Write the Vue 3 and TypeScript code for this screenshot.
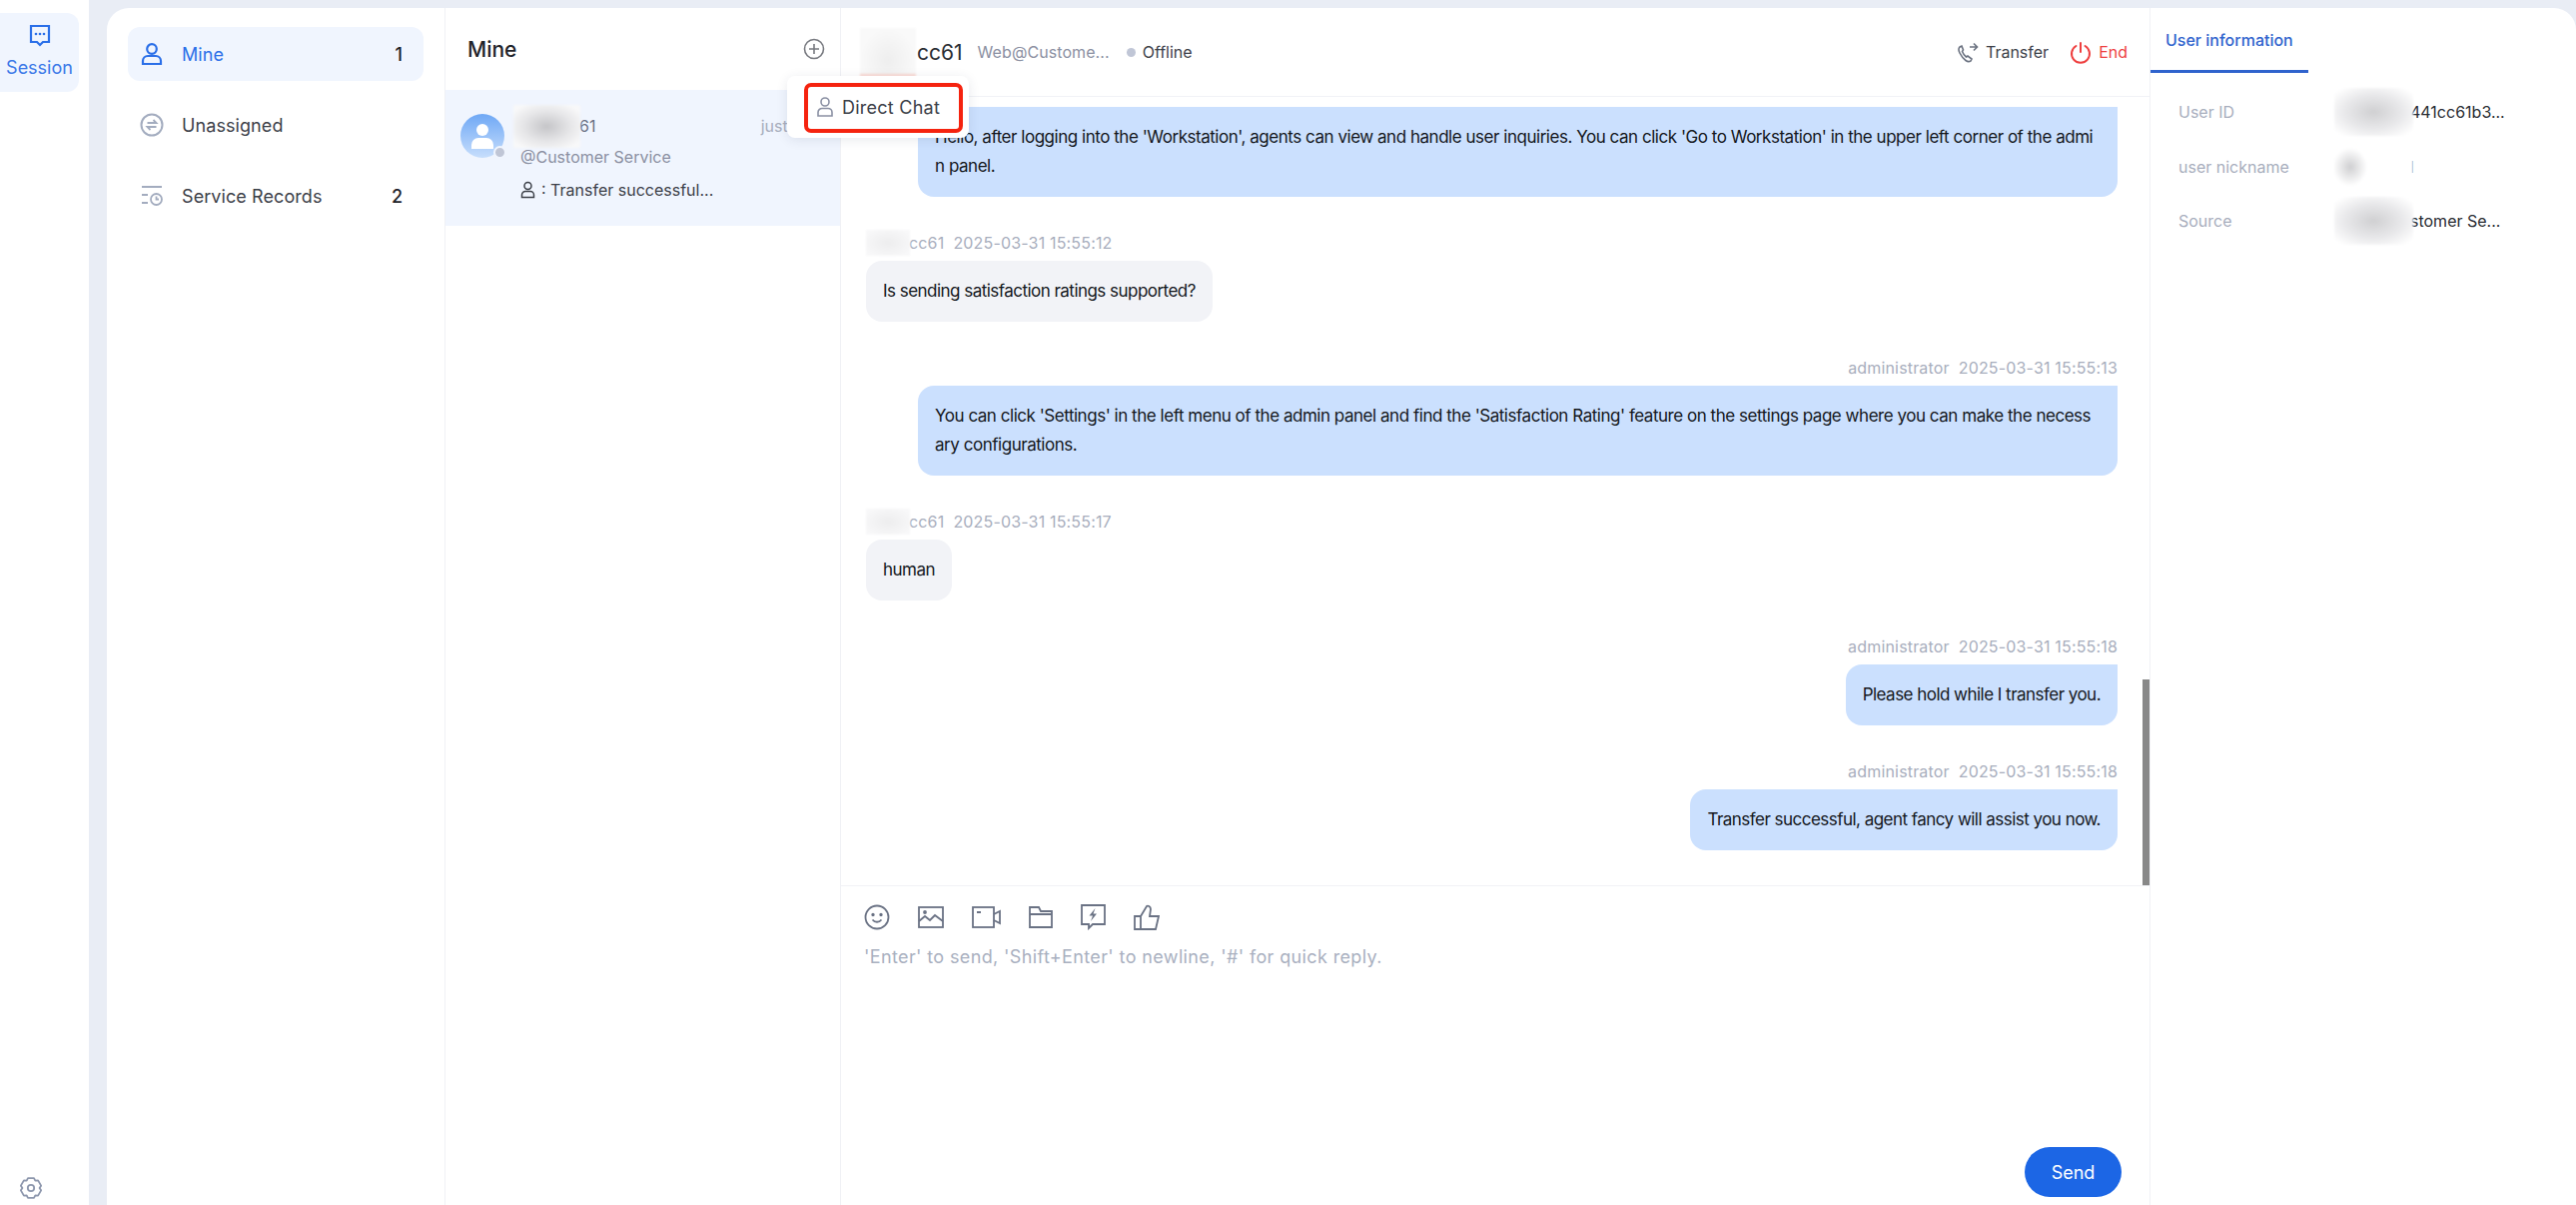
<script setup lang="ts">
interface Msg { side: 'l' | 'r'; who?: string; mask?: boolean; time?: string; lines: string[]; cls?: string }
const msgs: Msg[] = [
  { side: 'r', lines: ["Hello, after logging into the 'Workstation', agents can view and handle user inquiries. You can click 'Go to Workstation' in the upper left corner of the admi", 'n panel.'], cls: 'wide' },
  { side: 'l', who: 'cc61', mask: true, time: '2025-03-31 15:55:12', lines: ['Is sending satisfaction ratings supported?'] },
  { side: 'r', who: 'administrator', time: '2025-03-31 15:55:13', lines: ["You can click 'Settings' in the left menu of the admin panel and find the 'Satisfaction Rating' feature on the settings page where you can make the necess", 'ary configurations.'], cls: 'wide' },
  { side: 'l', who: 'cc61', mask: true, time: '2025-03-31 15:55:17', lines: ['human'] },
  { side: 'r', who: 'administrator', time: '2025-03-31 15:55:18', lines: ['Please hold while I transfer you.'] },
  { side: 'r', who: 'administrator', time: '2025-03-31 15:55:18', lines: ['Transfer successful, agent fancy will assist you now.'] },
]

function gearPath(): string {
  const pts: string[] = []
  for (let i = 0; i < 6; i++) {
    const c = -90 + i * 60
    for (const [da, r] of [[-17, 10.4], [17, 10.4], [30, 8.6]] as const) {
      const a = ((c + da) * Math.PI) / 180
      pts.push(`${(12 + r * Math.cos(a)).toFixed(2)} ${(12 + r * Math.sin(a)).toFixed(2)}`)
    }
  }
  return 'M' + pts.join('L') + 'Z'
}
const gear = gearPath()
</script>

<template>
  <div class="app">
    <nav class="rail">
      <div class="rail-item">
        <svg width="22" height="24" viewBox="0 0 22 24" fill="none"><path d="M2 2h18v16h-6l-3 3-3-3H2z" stroke="#2a6fe8" stroke-width="2.2"/><circle cx="7" cy="10" r="1.3" fill="#2a6fe8"/><circle cx="11" cy="10" r="1.3" fill="#2a6fe8"/><circle cx="15" cy="10" r="1.3" fill="#2a6fe8"/></svg>
        <span>Session</span>
      </div>
      <svg class="gear" width="24" height="24" viewBox="0 0 24 24" fill="none" stroke="#8d97ad" stroke-width="1.8" stroke-linejoin="round"><path :d="gear"/><circle cx="12" cy="12" r="3.2"/></svg>
    </nav>

    <div class="card">
      <aside class="menu">
        <div class="menu-item active">
          <svg width="22" height="24" viewBox="0 0 22 24" fill="none" stroke="#2a6fe8" stroke-width="2.2"><circle cx="11" cy="7" r="4.8"/><path d="M2 22v-3a5 5 0 0 1 5-5h8a5 5 0 0 1 5 5v3z"/></svg>
          <span class="menu-label">Mine</span><b>1</b>
        </div>
        <div class="menu-item">
          <svg width="24" height="24" viewBox="0 0 24 24" fill="none" stroke="#a3acbf" stroke-width="2"><circle cx="12" cy="12" r="10.5"/><path d="M7.5 10h9l-3-3M16.5 14h-9l3 3" stroke-width="1.8"/></svg>
          <span class="menu-label">Unassigned</span>
        </div>
        <div class="menu-item">
          <svg width="24" height="24" viewBox="0 0 24 24" fill="none" stroke="#a3acbf" stroke-width="1.8"><path d="M2 3h20M2 11h6M2 19h6"/><circle cx="16.5" cy="15.5" r="5.5"/><path d="M16.5 12.5v3h2.5"/></svg>
          <span class="menu-label">Service Records</span><b>2</b>
        </div>
      </aside>

      <section class="list">
        <header class="list-head">
          <h2>Mine</h2>
          <svg width="22" height="22" viewBox="0 0 22 22" fill="none" stroke="#77797f" stroke-width="1.6"><circle cx="11" cy="11" r="9.5"/><path d="M11 6v10M6 11h10"/></svg>
        </header>
        <div class="popup">
          <div class="popup-inner">
            <svg width="18" height="22" viewBox="0 0 18 22" fill="none" stroke="#8a90a3" stroke-width="1.6"><circle cx="9" cy="6" r="4"/><path d="M2 20v-3.5A4 4 0 0 1 6 12.5h6a4 4 0 0 1 4 4V20z"/></svg>
            <span>Direct Chat</span>
          </div>
          <i class="annot"></i>
        </div>
        <div class="conv">
          <div class="avatar">
            <svg width="26" height="28" viewBox="0 0 26 28" fill="#fff"><circle cx="13" cy="8" r="6"/><path d="M2 27v-4a7 7 0 0 1 7-7h8a7 7 0 0 1 7 7v4z"/></svg>
            <i class="dot"></i>
          </div>
          <div class="conv-body">
            <div class="conv-top"><span class="conv-name"><i class="mask m-list"></i>61</span><span class="conv-time">just now</span></div>
            <div class="conv-src">@Customer Service</div>
            <div class="conv-msg">
              <svg width="15" height="18" viewBox="0 0 15 18" fill="none" stroke="#3c4048" stroke-width="1.5"><circle cx="7.5" cy="5" r="3.5"/><path d="M1.5 16.5V14A3.5 3.5 0 0 1 5 10.5h5a3.5 3.5 0 0 1 3.5 3.500v2.500z"/></svg>
              <span>: Transfer successful...</span>
            </div>
          </div>
        </div>
      </section>

      <section class="chat">
        <header class="chat-head">
          <span class="chat-name"><i class="mask m-head"></i>cc61</span>
          <span class="chat-src">Web@Custome...</span>
          <span class="chat-status"><i></i>Offline</span>
          <span class="spacer"></span>
          <span class="act">
            <svg width="22" height="24" viewBox="0 0 22 24" fill="none" stroke="#6b7280" stroke-width="1.6"><path d="M3 7c-1.500 1.500-1.500 3 0 6s4 6 6 7.500 3.500 1.500 5 .5l1-2-4-3-1.500 1c-1.500-1-3-3-4-5.500L6.500 10 5 6z"/><path d="M13 7h7M17 3.500L20.500 7 17 10.500"/></svg>
            Transfer
          </span>
          <span class="act end">
            <svg width="22" height="24" viewBox="0 0 22 24" fill="none" stroke="#ee3f3f" stroke-width="2" stroke-linecap="round"><path d="M6.500 6a9 9 0 1 0 9 0M11 3v9"/></svg>
            End
          </span>
        </header>

        <div class="msgs">
          <div v-for="(m, i) in msgs" :key="i" class="msg" :class="m.side">
            <div v-if="m.who" class="meta"><i v-if="m.mask" class="mask m-meta"></i><span>{{ m.who }}</span><span>{{ m.time }}</span></div>
            <div class="bubble" :class="[m.side, m.cls]"><div v-for="(l, j) in m.lines" :key="j">{{ l }}</div></div>
          </div>
          <i class="thumb"></i>
        </div>

        <div class="composer">
          <div class="tools">
            <svg width="26" height="26" viewBox="0 0 26 26" fill="none" stroke="#6a7284" stroke-width="1.8"><circle cx="13" cy="13" r="11.5"/><circle cx="9" cy="10.5" r=".8"/><circle cx="17" cy="10.5" r=".8"/><path d="M8.500 15.500c2.500 3 6.500 3 9 0"/></svg>
            <svg width="26" height="22" viewBox="0 0 26 22" fill="none" stroke="#6a7284" stroke-width="1.8"><rect x="1" y="1" width="24" height="20"/><path d="M1 15l6-5 5 4 5-5 8 6"/><circle cx="7" cy="6" r="1" fill="#6a7284"/></svg>
            <svg width="29" height="22" viewBox="0 0 29 22" fill="none" stroke="#6a7284" stroke-width="1.8"><rect x="1" y="1" width="21" height="20"/><path d="M22 8l6-3v12l-6-3M5 6h4"/></svg>
            <svg width="24" height="22" viewBox="0 0 24 22" fill="none" stroke="#6a7284" stroke-width="1.8"><path d="M1 21V1h9l2 4h11v16zM1 8h22"/></svg>
            <svg width="25" height="26" viewBox="0 0 25 26" fill="none" stroke="#6a7284" stroke-width="1.8"><path d="M1 1h23v19H12l-4 4v-4H1z"/><path d="M14.500 4l-6 7.500h3.500l-2 5.500 6-7.500h-3.500z" fill="#6a7284" stroke="none"/></svg>
            <svg width="26" height="26" viewBox="0 0 26 26" fill="none" stroke="#6a7284" stroke-width="1.8"><path d="M1 12h6v13H1zM7 25h15l3-13h-9l1-7c0-3-3-4-4-3l-6 10z"/></svg>
          </div>
          <div class="placeholder">'Enter' to send, 'Shift+Enter' to newline, '#' for quick reply.</div>
          <div class="send-row"><button class="send">Send</button></div>
        </div>
      </section>

      <aside class="info">
        <div class="tab">User information</div>
        <div class="rows">
          <div class="row"><span class="k">User ID</span><span class="v"><i class="mask m-val"></i>441cc61b3...</span></div>
          <div class="row"><span class="k">user nickname</span><span class="v"><i class="mask m-val m-nick"></i>l</span></div>
          <div class="row"><span class="k">Source</span><span class="v"><i class="mask m-val"></i>stomer Se...</span></div>
        </div>
      </aside>
    </div>
  </div>
</template>

<style>
html, body { margin: 0; background: #e9edf5; overflow: hidden; }
</style>

<style scoped>
.app { display: flex; height: 1206px; background: #e9edf5; font-family: Inter, "Noto Sans CJK SC", sans-serif; color: #1f2329; }
.rail { width: 89px; flex: none; background: #fff; display: flex; flex-direction: column; align-items: flex-start; padding-top: 13px; box-sizing: border-box; }
.rail-item { width: 79px; height: 79px; background: #f0f5fe; border-radius: 0 12px 12px 0; display: flex; flex-direction: column; align-items: center; padding-top: 11px; box-sizing: border-box; color: #3a78e8; font-size: 18px; line-height: 24px; gap: 8px; }
.gear { margin-top: auto; margin-left: 19px; margin-bottom: 5px; }
.card { flex: 1; margin: 8px 0 0 18px; background: #fff; border-radius: 22px 22px 0 0; display: flex; overflow: hidden; min-width: 0; }
.menu { width: 339px; flex: none; box-sizing: border-box; padding: 19px 21px; border-right: 1px solid #f0f1f5; display: flex; flex-direction: column; gap: 17px; }
.menu-item { height: 54px; border-radius: 12px; display: flex; align-items: center; padding: 0 21px 0 12px; font-size: 18px; color: #3c4048; }
.menu-item svg { width: 24px; flex: none; }
.menu-label { margin-left: 18px; flex: 1; letter-spacing: .08px; }
.menu-item b { font-weight: 500; color: #1f2329; font-size: 18px; }
.menu-item.active { background: #f0f5fe; color: #2a6fe8; }
.list { width: 396px; flex: none; position: relative; border-right: 1px solid #f0f1f5; box-sizing: border-box; }
.list-head { height: 82px; display: flex; align-items: center; justify-content: space-between; padding: 0 15px 0 22px; box-sizing: border-box; }
.list-head h2 { margin: 0; font-size: 21px; font-weight: 500; color: #1f2329; }
.popup { position: absolute; z-index: 5; left: 342px; top: 68px; width: 182px; height: 62px; background: #fff; border-radius: 8px; box-shadow: 0 2px 12px rgba(40, 50, 80, .1); display: flex; align-items: center; padding-left: 29px; box-sizing: border-box; }
.popup-inner { display: flex; align-items: center; gap: 8px; font-size: 18px; color: #3c4048; letter-spacing: .25px; }
.annot { position: absolute; left: 17px; top: 7px; width: 159px; height: 50px; box-sizing: border-box; border: 4px solid #f5230f; border-radius: 7px; }
.conv { height: 136px; background: #f0f5fe; display: flex; padding: 24px 0 0 15px; box-sizing: border-box; }
.avatar { width: 44px; height: 44px; border-radius: 50%; background: linear-gradient(#6fa8f5, #c7defc); position: relative; display: flex; align-items: center; justify-content: center; flex: none; }
.dot { position: absolute; right: -2px; bottom: -1px; width: 9px; height: 9px; border-radius: 50%; background: #c0c6d6; border: 2px solid #f0f5fe; }
.conv-body { margin-left: 16px; flex: 1; min-width: 0; }
.conv-top { display: flex; align-items: center; height: 24px; font-size: 16px; color: #6b7184; padding-right: 16px; justify-content: space-between; margin-left: -7px; }
.conv-time { color: #a7adbc; white-space: nowrap; }
.conv-src { font-size: 16px; line-height: 24px; color: #8b90a2; margin-top: 7px; }
.conv-msg { display: flex; align-items: center; gap: 6px; font-size: 16px; line-height: 24px; color: #3c4048; margin-top: 9px; }
.conv-name { display: inline-flex; align-items: center; }
.mask { display: inline-block; flex: none; background: radial-gradient(ellipse at 50% 50%, #c5c5c8 0, #e6e6e8 50%, #f8f8f9 85%); filter: blur(1px); }
.m-list { width: 67px; height: 43px; margin: -10px -1px -10px 0; }
.m-head { width: 56px; height: 46px; margin: -12px 1px -12px 0; background: radial-gradient(ellipse at 50% 70%, #eee 0, #f9f9f9 70%), #fafafa; border-bottom: 3px solid #fbd9d2; }
.m-meta { width: 44px; height: 26px; margin: -4px 0; background: radial-gradient(ellipse at 50% 50%, #ededee 0, #f8f8f9 85%); }
.m-val { width: 79px; height: 48px; margin: -14px -3px -14px 0; background: radial-gradient(ellipse at 50% 50%, #d0d0d2 0, #e8e8ea 50%, #fff 90%); }
.m-nick { background: radial-gradient(ellipse 22% 40% at 20% 50%, #cfcfd1 0, #fff 100%), #fff; }
.chat { flex: 1; min-width: 0; display: flex; flex-direction: column; border-right: 1px solid #f0f1f5; }
.chat-head { height: 89px; flex: none; display: flex; align-items: center; padding: 0 22px 0 19px; border-bottom: 1px solid #f1f2f6; box-sizing: border-box; }
.chat-name { font-size: 21px; display: inline-flex; align-items: center; color: #2a2d33; }
.chat-src { font-size: 16px; color: #8b90a2; margin-left: 15px; letter-spacing: .08px; }
.chat-status { font-size: 16px; color: #3c4048; margin-left: 17px; display: inline-flex; align-items: center; gap: 7px; }
.chat-status i { width: 9px; height: 9px; border-radius: 50%; background: #c0c6d6; }
.spacer { flex: 1; }
.act { display: inline-flex; align-items: center; gap: 7px; font-size: 16px; color: #3c4048; }
.act.end { color: #ee3f3f; margin-left: 21px; }
.msgs { flex: 1; min-height: 0; position: relative; overflow: hidden; padding: 10px 32px 0 25px; display: flex; flex-direction: column; gap: 37px; }
.thumb { position: absolute; right: 0; bottom: 0; width: 7px; height: 206px; background: #888; }
.msg { display: flex; flex-direction: column; }
.msg.r { align-items: flex-end; }
.msg.l { align-items: flex-start; }
.meta { display: flex; align-items: center; height: 18px; gap: 9px; margin-bottom: 9px; font-size: 16px; color: #a8aebd; letter-spacing: .17px; }
.meta .mask + span { margin-left: -10px; }
.bubble { padding: 16px 17px; font-size: 17px; line-height: 29px; color: #14171c; letter-spacing: -0.53px; border-radius: 16px; white-space: nowrap; box-sizing: border-box; }
.bubble.l { background: #f2f3f7; }
.bubble.r { background: #cbe0fe; border-radius: 16px 0 16px 16px; }
.bubble.wide { width: 1201px; letter-spacing: -0.47px; }
.composer { flex: none; height: 320px; box-sizing: border-box; border-top: 1px solid #f1f2f6; padding: 17px 28px 8px 23px; display: flex; flex-direction: column; }
.tools { display: flex; align-items: center; height: 28px; gap: 28px; }
.placeholder { font-size: 18px; letter-spacing: .37px; color: #a9b0bf; margin-top: 14px; line-height: 24px; }
.send-row { margin-top: auto; display: flex; justify-content: flex-end; }
.send { width: 97px; height: 50px; border: 0; border-radius: 25px; background: #1c66e5; color: #fff; font: inherit; font-size: 18px; }
.info { width: 426px; flex: none; }
.tab { width: 158px; height: 65px; box-sizing: border-box; padding: 20px 0 0 15px; font-size: 16px; line-height: 24px; color: #2f63cd; border-bottom: 3px solid #2f63cd; font-weight: 500; white-space: nowrap; }
.rows { padding: 12px 0 0 28px; }
.row { display: flex; align-items: center; height: 54.5px; font-size: 16px; }
.k { width: 156px; color: #a8aebd; }
.v { display: inline-flex; align-items: center; color: #2a2d33; }
</style>
